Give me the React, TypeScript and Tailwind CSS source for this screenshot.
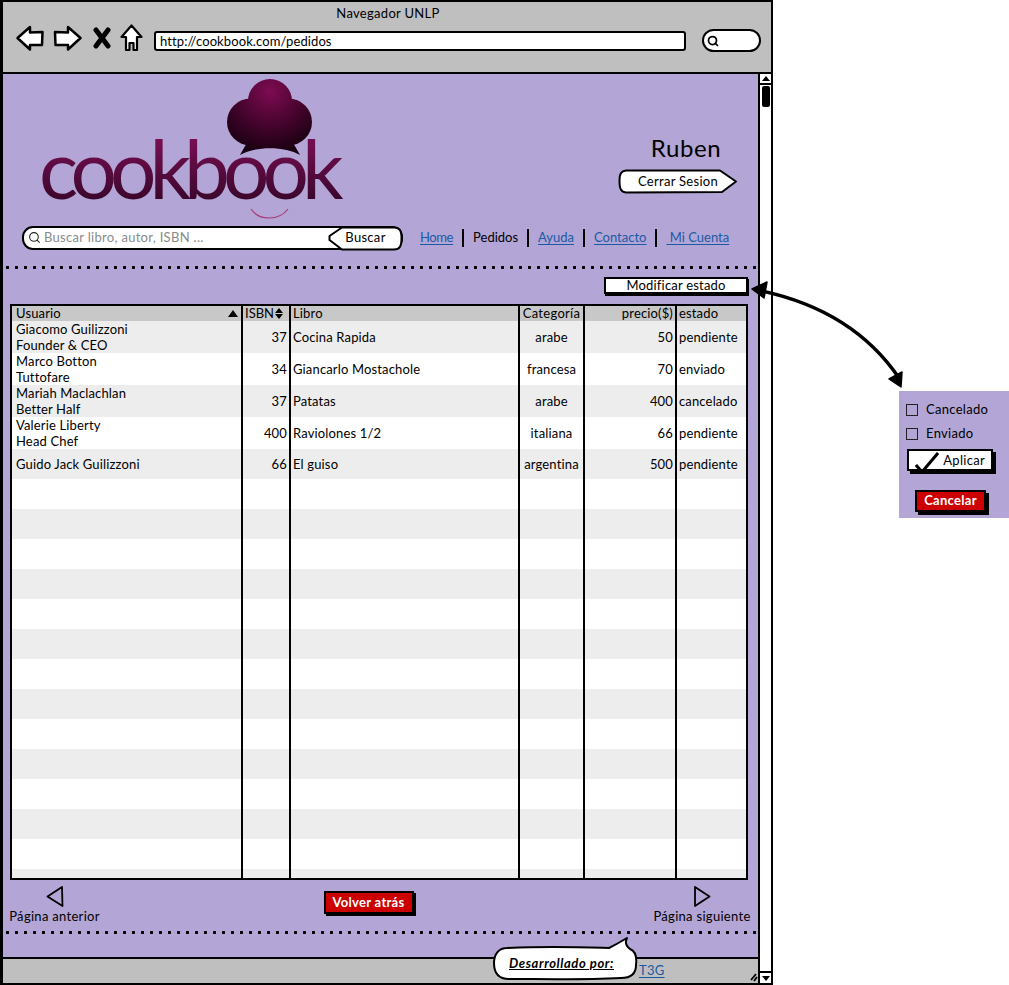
import React from "react";
import { Search } from "lucide-react";

const orders = [
  { user: ["Giacomo Guilizzoni", "Founder & CEO"], isbn: 37, book: "Cocina Rapida", cat: "arabe", price: 50, state: "pendiente" },
  { user: ["Marco Botton", "Tuttofare"], isbn: 34, book: "Giancarlo Mostachole", cat: "francesa", price: 70, state: "enviado" },
  { user: ["Mariah Maclachlan", "Better Half"], isbn: 37, book: "Patatas", cat: "arabe", price: 400, state: "cancelado" },
  { user: ["Valerie Liberty", "Head Chef"], isbn: 400, book: "Raviolones 1/2", cat: "italiana", price: 66, state: "pendiente" },
];

const cols = "grid grid-cols-[231px_48px_229px_65px_92px_69px]";
const line = "border-r-2 border-black";
const dots = "h-[3px] bg-[radial-gradient(circle,#000_1.4px,transparent_1.6px)] bg-[length:9px_3px]";

const BrowserIcons = () => (
  <div className="flex items-center">
    <svg width="28" height="26" viewBox="0 0 28 26">
      <path d="M1.5 13 L14 2 L14 7.5 L26.5 7 L26 20 L14 20 L14 24.5 Z" fill="#fff" stroke="#000" strokeWidth="2.5" strokeLinejoin="round" />
    </svg>
    <svg className="ml-[9px]" width="29" height="26" viewBox="0 0 29 26">
      <path d="M27.5 13 L15 2 L15 7.5 L2 7 L2.5 20 L15 20 L15 24.5 Z" fill="#fff" stroke="#000" strokeWidth="2.5" strokeLinejoin="round" />
    </svg>
    <svg className="ml-[11px]" width="18" height="22" viewBox="0 0 18 22">
      <path d="M3 3 L15 19 M15 3 L3 19" stroke="#000" strokeWidth="5" strokeLinecap="round" />
    </svg>
    <svg className="ml-[9px]" width="23" height="28" viewBox="0 0 23 28">
      <path d="M11.5 1.5 L21.5 13 L17 13 L17 26 L13.5 26 L13.5 19 L9.5 19 L9.5 26 L6 26 L6 13 L1.5 13 Z" fill="#fff" stroke="#000" strokeWidth="2.2" strokeLinejoin="round" />
    </svg>
  </div>
);

const Logo = () => (
  <div className="relative ml-[36px] w-[321px] h-[151px] shrink-0">
    <span className="block w-fit pr-[12px] mt-[43px] text-[82px] leading-[100px] tracking-[-7px] bg-gradient-to-b from-[#8f1162] to-[#2c0522] bg-clip-text text-transparent">
      cookbook
    </span>
    <svg className="absolute left-[186px] top-[3px]" width="90" height="80" viewBox="0 0 90 80">
      <defs>
        <radialGradient id="hat" gradientUnits="userSpaceOnUse" cx="45" cy="14" r="64">
          <stop offset="0" stopColor="#7e0b52" />
          <stop offset="0.6" stopColor="#3f0329" />
          <stop offset="1" stopColor="#170010" />
        </radialGradient>
      </defs>
      <g fill="url(#hat)">
        <circle cx="45" cy="24" r="22" />
        <circle cx="25.5" cy="45" r="23.5" />
        <circle cx="63.5" cy="45" r="23.5" />
        <path d="M28 55 L15 78 C30 69 60 69 75 78 L62 55 Z" />
      </g>
    </svg>
    <svg className="absolute left-[210px] top-[133px]" width="42" height="14" viewBox="0 0 42 14">
      <path d="M2 2 C10 14 30 14 39 2" fill="none" stroke="#a83a78" strokeWidth="1.2" />
    </svg>
  </div>
);

const Separator = () => <span className="w-[2px] h-[18px] bg-black shrink-0" />;

const NavLink = ({ children, className = "" }: { children: React.ReactNode; className?: string }) => (
  <a className={`text-[#1a5aa5] underline underline-offset-2 text-[13px] whitespace-pre ${className}`}>{children}</a>
);

const Scrollbar = () => (
  <div className="w-[13px] border-l-2 border-black bg-white flex flex-col items-center shrink-0">
    <div className="w-full h-[11px] border-b-2 border-black flex items-center justify-center">
      <span className="w-0 h-0 border-x-[4px] border-x-transparent border-b-[5px] border-b-black" />
    </div>
    <div className="w-[8px] h-[21px] mt-[1px] bg-black rounded-[2px]" />
    <div className="mt-auto w-full h-[12px] border-t-2 border-black flex items-center justify-center">
      <span className="w-0 h-0 border-x-[4px] border-x-transparent border-t-[5px] border-t-black" />
    </div>
  </div>
);

const OrdersTable = () => (
  <div className="mt-[10px] ml-[7px] w-[738px] h-[576px] border-2 border-black overflow-hidden bg-white text-[13px] leading-[16px] tracking-[0.15px]">
    <div className={`${cols} h-[15px] bg-[#c8c8c8] leading-[15px]`}>
      <div className={`${line} pl-[4px] pr-[3px] flex items-center justify-between`}>
        Usuario
        <span className="w-0 h-0 border-x-[5px] border-x-transparent border-b-[7px] border-b-black" />
      </div>
      <div className={`${line} pl-[2px] flex items-center tracking-normal`}>
        ISBN
        <span className="ml-[1px] flex flex-col gap-[1px]">
          <span className="w-0 h-0 border-x-[4.5px] border-x-transparent border-b-[5px] border-b-black" />
          <span className="w-0 h-0 border-x-[4.5px] border-x-transparent border-t-[5px] border-t-black" />
        </span>
      </div>
      <div className={`${line} pl-[2px]`}>Libro</div>
      <div className={`${line} text-center tracking-[0.3px]`}>Categoría</div>
      <div className={`${line} text-right pr-[2px]`}>precio($)</div>
      <div className="pl-[2px]">estado</div>
    </div>
    {orders.map((o, i) => (
      <div key={i} className={`${cols} h-[32px] ${i % 2 === 0 ? "bg-[#ededed]" : "bg-white"}`}>
        <div className={`${line} pl-[4px]`}>
          <div>{o.user[0]}</div>
          <div>{o.user[1]}</div>
        </div>
        <div className={`${line} flex items-center justify-end pr-[2px]`}>{o.isbn}</div>
        <div className={`${line} flex items-center pl-[2px]`}>{o.book}</div>
        <div className={`${line} flex items-center justify-center`}>{o.cat}</div>
        <div className={`${line} flex items-center justify-end pr-[2px]`}>{o.price}</div>
        <div className="flex items-center pl-[2px]">{o.state}</div>
      </div>
    ))}
    <div className={`${cols} h-[30px] bg-[#ededed]`}>
      <div className={`${line} flex items-center pl-[4px]`}>Guido Jack Guilizzoni</div>
      <div className={`${line} flex items-center justify-end pr-[2px]`}>66</div>
      <div className={`${line} flex items-center pl-[2px]`}>El guiso</div>
      <div className={`${line} flex items-center justify-center`}>argentina</div>
      <div className={`${line} flex items-center justify-end pr-[2px]`}>500</div>
      <div className="flex items-center pl-[2px]">pendiente</div>
    </div>
    {Array.from({ length: 14 }).map((_, i) => (
      <div key={i} className={`${cols} h-[30px] ${i % 2 === 0 ? "bg-white" : "bg-[#ededed]"}`}>
        <div className={line} />
        <div className={line} />
        <div className={line} />
        <div className={line} />
        <div className={line} />
        <div />
      </div>
    ))}
  </div>
);

const Pager = () => (
  <div className="mt-[5px] h-[40px] flex justify-between text-[13px]">
    <div className="ml-[6px] w-[91px] flex flex-col items-center">
      <svg width="20" height="23" viewBox="0 0 20 23">
        <path d="M17 2 L2.5 11.5 L17.5 21 Z" fill="none" stroke="#000" strokeWidth="1.8" strokeLinejoin="round" />
      </svg>
      <span className="leading-[16px] whitespace-nowrap">Página anterior</span>
    </div>
    <div className="mt-[6px] ml-[-15px] w-[90px] h-[23px] pt-[1px] bg-[#cc0000] border-2 border-black shadow-[2px_2px_0_#000] text-white font-bold text-[13px] flex items-center justify-center">
      Volver atrás
    </div>
    <div className="mr-[6px] w-[100px] flex flex-col items-center">
      <svg width="20" height="23" viewBox="0 0 20 23">
        <path d="M3 2 L17.5 11.5 L3 21 Z" fill="none" stroke="#000" strokeWidth="1.8" strokeLinejoin="round" />
      </svg>
      <span className="leading-[16px] whitespace-nowrap">Página siguiente</span>
    </div>
  </div>
);

const SidePanel = () => (
  <div className="absolute left-[899px] top-[391px] w-[110px] h-[127px] bg-[#b3a5d5] text-[13px] flex flex-col pl-[7px] pt-[12px]">
    <label className="flex items-center h-[14px]">
      <span className="w-[12px] h-[12px] border border-[#222]" />
      <span className="ml-[8px]">Cancelado</span>
    </label>
    <label className="mt-[10px] flex items-center h-[14px]">
      <span className="w-[12px] h-[12px] border border-[#222]" />
      <span className="ml-[8px]">Enviado</span>
    </label>
    <div className="relative mt-[8px] ml-[1px] w-[86px] h-[22px] bg-white border-2 border-black shadow-[3px_3px_0_#000] text-right pr-[6px] leading-[18px] text-[13px]">
      Aplicar
      <svg className="absolute left-[6px] top-[1px]" width="24" height="22" viewBox="0 0 24 22">
        <path d="M1 13 L7 20 L23 1" fill="none" stroke="#000" strokeWidth="3" />
      </svg>
    </div>
    <div className="mt-[19px] ml-[9px] w-[71px] h-[22px] bg-[#cc0000] border-2 border-black shadow-[3px_3px_0_#000] text-white font-bold text-[13px] flex items-center justify-center">
      Cancelar
    </div>
  </div>
);

const Arrow = () => (
  <svg className="absolute left-[745px] top-[275px]" width="170" height="120" viewBox="745 275 170 120">
    <path d="M757 290 Q852 309 899 378" fill="none" stroke="#000" strokeWidth="3.5" />
    <path d="M752 289 L767 282 L764 298 Z" fill="#000" stroke="#000" strokeWidth="1.5" strokeLinejoin="round" />
    <path d="M901 387 L889 379 L902 372 Z" fill="#000" stroke="#000" strokeWidth="1.5" strokeLinejoin="round" />
  </svg>
);

const Bubble = () => (
  <div className="absolute left-[491px] top-[935px] w-[148px] h-[46px]">
    <svg className="absolute inset-0" width="148" height="46" viewBox="0 0 148 46">
      <path
        d="M16 13 C60 11 85 12 118 13 C124 10 131 6 136 3 C134 7 135 11 139 14 C144 16 146 22 145 30 C145 38 140 43 130 43 C90 45 50 44 18 44 C8 44 3 38 3 28 C3 19 8 13 16 13 Z"
        fill="#fff"
        stroke="#000"
        strokeWidth="2"
        strokeLinejoin="round"
      />
    </svg>
    <span className="absolute left-[18px] top-[20px] text-[13px] leading-[16px] font-bold italic underline whitespace-nowrap tracking-[0.6px]">
      Desarrollado por:
    </span>
  </div>
);

export default function App() {
  return (
    <div className="relative w-[1009px] h-[985px] bg-white overflow-hidden text-black tracking-[0.3px] font-['Lato',sans-serif]">
      <div className="w-[773px] h-[985px] border-2 border-l-[3px] border-black flex flex-col">
        {/* browser chrome */}
        <div className="h-[72px] shrink-0 bg-[#bfbfbf] border-b-2 border-black">
          <div className="h-[22px] text-center text-[13px] leading-[22px] pl-[2px]">Navegador UNLP</div>
          <div className="flex items-center pl-[13px] h-[28px]">
            <BrowserIcons />
            <div className="ml-[11px] mt-[6px] w-[532px] h-[20px] bg-white border-2 border-black rounded-[3px] text-[13px] leading-[16px] tracking-[0.1px] pl-[4px]">
              http://cookbook.com/pedidos
            </div>
            <div className="ml-[16px] mt-[5px] w-[59px] h-[23px] bg-white border-2 border-black rounded-full flex items-center pl-[3px]">
              <Search size={12} strokeWidth={3.5} />
            </div>
          </div>
        </div>

        <div className="flex-1 flex min-h-0">
          <div className="flex-1 flex flex-col min-w-0">
            <div className="flex-1 bg-[#b3a5d5]">
              <div className="flex h-[151px]">
                <Logo />
                <div className="ml-auto mr-[20px] flex flex-col items-center">
                  <span className="mt-[59px] ml-[16px] text-[24px] leading-[30px] tracking-[0.6px]">Ruben</span>
                  <div className="relative mt-[6px] w-[120px] h-[25px] flex items-center justify-center text-[13px]">
                    <svg className="absolute inset-0" width="120" height="25" viewBox="0 0 120 25">
                      <path d="M8 1.5 L102 1.5 L118 12.5 L104 23 L8 23.5 C3 23 1.5 20 1.5 12 C1.5 5 3 2 8 1.5 Z" fill="#fff" stroke="#000" strokeWidth="2" strokeLinejoin="round" />
                    </svg>
                    <span className="relative">Cerrar Sesion</span>
                  </div>
                </div>
              </div>

              <div className="flex items-center h-[25px]">
                <div className="relative ml-[19px] w-[381px] h-[24px] bg-white border-2 border-black rounded-[11px] flex items-center pl-[4px] text-[13px] text-[#8a8a8a]">
                  <Search size={13} className="text-[#222]" />
                  <span className="ml-[3px]">Buscar libro, autor, ISBN ...</span>
                  <div className="absolute right-[-2px] top-[-2px] w-[75px] h-[25px] flex items-center justify-center text-black">
                    <svg className="absolute inset-0" width="75" height="25" viewBox="0 0 75 25">
                      <path d="M14 1.5 L66 1.5 C72 1.5 73.5 5 73.5 12 C73.5 20 72 23.5 66 23.5 L14 23.5 L1.5 14 L1.5 10 Z" fill="#fff" stroke="#000" strokeWidth="2" strokeLinejoin="round" />
                    </svg>
                    <span className="relative">Buscar</span>
                  </div>
                </div>
                <nav className="ml-[17px] flex items-center gap-[9px] text-[13px] tracking-normal">
                  <NavLink className="tracking-[-0.4px]">Home</NavLink>
                  <Separator />
                  <span>Pedidos</span>
                  <Separator />
                  <NavLink>Ayuda</NavLink>
                  <Separator />
                  <NavLink>Contacto</NavLink>
                  <Separator />
                  <NavLink> Mi Cuenta</NavLink>
                </nav>
              </div>

              <div className={`mt-[16px] ${dots}`} />

              <div className="mt-[8px] ml-[601px] w-[144px] h-[17px] bg-white border-2 border-black shadow-[1px_2px_0_#000] text-center text-[13px] leading-[13px] tracking-[0.2px]">
                Modificar estado
              </div>

              <OrdersTable />
              <Pager />
              <div className={`mt-[6px] ${dots}`} />
            </div>

            {/* status bar */}
            <div className="h-[26px] shrink-0 bg-[#bfbfbf] border-t-2 border-black relative text-[13px] pl-[636px] pt-[2px]">
              <a className="text-[#1a5aa5] underline underline-offset-2">T3G</a>
              <svg className="absolute right-[0px] bottom-[1px]" width="8" height="10" viewBox="0 0 8 10">
                <path d="M1 8 L6 2 M4 9 L7 5" stroke="#000" strokeWidth="1.8" />
              </svg>
            </div>
          </div>
          <Scrollbar />
        </div>
      </div>

      <Arrow />
      <SidePanel />
      <Bubble />
    </div>
  );
}
